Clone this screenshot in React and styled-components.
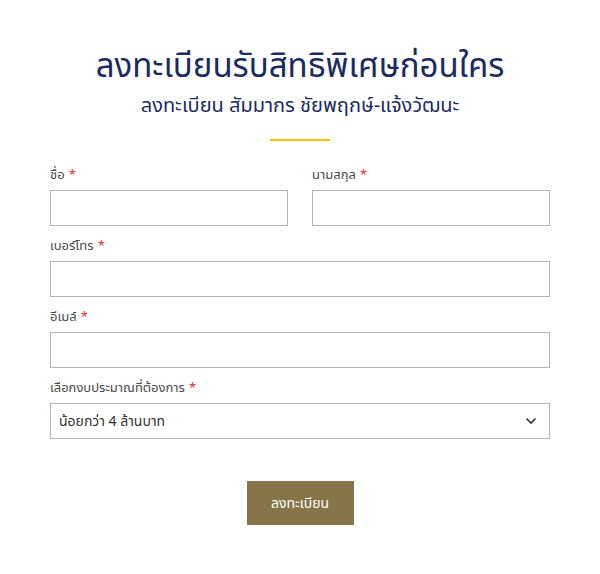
import React from 'react';
import styled, { createGlobalStyle } from 'styled-components';

const GlobalStyle = createGlobalStyle`
  body {
    margin: 0;
    background: #ffffff;
    font-family: "Noto Sans Thai", "Noto Sans", "DejaVu Sans", sans-serif;
  }
`;

const Page = styled.div`
  width: 600px;
  height: 574px;
  padding: 44px 50px 0 50px;
  box-sizing: border-box;
`;

const Header = styled.header`
  display: flex;
  flex-direction: column;
  align-items: center;
`;

const Title = styled.h1`
  margin: 0;
  font-size: 33px;
  font-weight: 400;
  line-height: 46px;
  color: #1b2b62;
`;

const Subtitle = styled.p`
  margin: 2px 0 0 0;
  font-size: 20px;
  line-height: 28px;
  color: #1b2b62;
`;

const Divider = styled.span`
  display: block;
  width: 60px;
  height: 2px;
  margin-top: 19px;
  background: #f2c200;
`;

const Form = styled.form`
  display: flex;
  flex-direction: column;
  gap: 12px;
  margin-top: 26px;
`;

const Row = styled.div`
  display: grid;
  grid-template-columns: ${p => (p.$cols === 2 ? '1fr 1fr' : '1fr')};
  gap: 24px;
`;

const Field = styled.label`
  display: flex;
  flex-direction: column;
  gap: 6px;
`;

const LabelText = styled.span`
  font-size: 13px;
  line-height: 17px;
  color: #4a4a4a;
`;

const Required = styled.span`
  color: #e0303a;
  margin-left: 4px;
`;

const Input = styled.input`
  height: 36px;
  box-sizing: border-box;
  border: 1px solid #b3b3b3;
  border-radius: 0;
  padding: 0 8px;
  font: inherit;
  background: #fff;
`;

const SelectBox = styled.div`
  display: flex;
  align-items: center;
  justify-content: space-between;
  height: 36px;
  box-sizing: border-box;
  border: 1px solid #b3b3b3;
  padding: 0 12px 0 8px;
  font-size: 14px;
  color: #333;
`;

const ButtonRow = styled.div`
  display: flex;
  justify-content: center;
  margin-top: 30px;
`;

const Submit = styled.button`
  width: 107px;
  height: 44px;
  border: none;
  background: #857549;
  color: #fff;
  font: inherit;
  font-size: 14px;
  cursor: pointer;
`;

function Label({ children }) {
  return (
    <LabelText>
      {children}
      <Required>*</Required>
    </LabelText>
  );
}

export default function App() {
  return (
    <>
      <GlobalStyle />
      <Page>
        <Header>
          <Title>ลงทะเบียนรับสิทธิพิเศษก่อนใคร</Title>
          <Subtitle>ลงทะเบียน สัมมากร ชัยพฤกษ์-แจ้งวัฒนะ</Subtitle>
          <Divider />
        </Header>
        <Form onSubmit={e => e.preventDefault()}>
          <Row $cols={2}>
            <Field>
              <Label>ชื่อ</Label>
              <Input type="text" />
            </Field>
            <Field>
              <Label>นามสกุล</Label>
              <Input type="text" />
            </Field>
          </Row>
          <Row>
            <Field>
              <Label>เบอร์โทร</Label>
              <Input type="tel" />
            </Field>
          </Row>
          <Row>
            <Field>
              <Label>อีเมล์</Label>
              <Input type="email" />
            </Field>
          </Row>
          <Row>
            <Field>
              <Label>เลือกงบประมาณที่ต้องการ</Label>
              <SelectBox>
                <span>น้อยกว่า 4 ล้านบาท</span>
                <svg width="12" height="8" viewBox="0 0 12 8" fill="none">
                  <path d="M1.5 1.5 L6 6 L10.5 1.5" stroke="#333" strokeWidth="1.6" />
                </svg>
              </SelectBox>
            </Field>
          </Row>
          <ButtonRow>
            <Submit type="submit">ลงทะเบียน</Submit>
          </ButtonRow>
        </Form>
      </Page>
    </>
  );
}
